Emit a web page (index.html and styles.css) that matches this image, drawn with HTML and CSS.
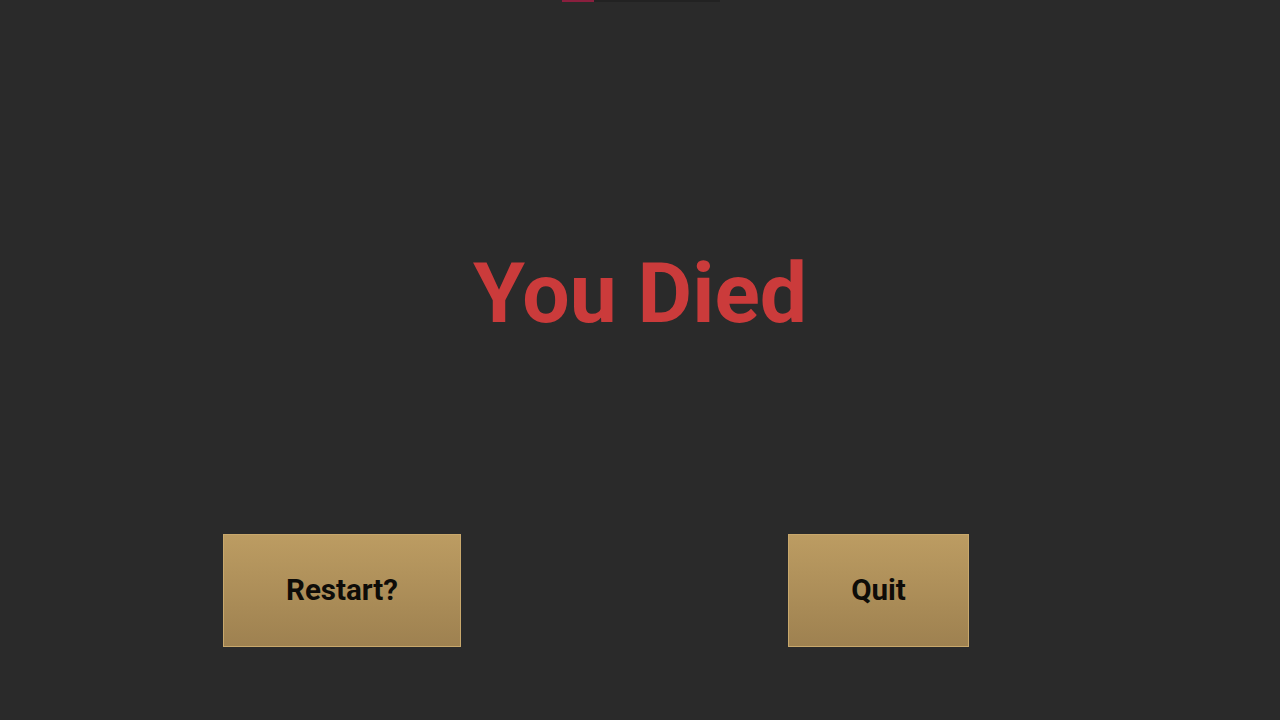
FILE: index.html
```html
<!DOCTYPE html>
<html>
<head>
<meta charset="utf-8">
<link rel="stylesheet" href="styles.css">
<title>You Died</title>
</head>
<body>
<div class="screen">
  <div class="hud">
    <div class="hp-bar"><div class="hp-fill"></div></div>
  </div>
  <h1 class="title">You Died</h1>
  <div class="actions">
    <button class="btn btn-restart">Restart?</button>
    <button class="btn btn-quit">Quit</button>
  </div>
</div>
</body>
</html>
```
FILE: styles.css
```css
html, body {
  margin: 0;
  padding: 0;
  background: #2a2a2a;
}
.screen {
  width: 1280px;
  height: 720px;
  display: flex;
  flex-direction: column;
  font-family: Roboto, "Liberation Sans", sans-serif;
}
.hud {
  display: flex;
  justify-content: center;
  height: 2px;
}
.hp-bar {
  width: 158px;
  height: 2px;
  background: #222222;
  margin-left: 1px;
}
.hp-fill {
  width: 32px;
  height: 2px;
  background: #8a1f3e;
}
.title {
  margin: 250px 0 0 0;
  text-align: center;
  font-size: 84px;
  line-height: 84px;
  font-weight: 700;
  color: #cb3b3b;
  letter-spacing: 0;
}
.actions {
  display: flex;
  gap: 327px;
  padding-left: 223px;
  margin-top: 198px;
}
.btn {
  height: 113px;
  border: 1px solid #c8a86c;
  background: linear-gradient(to bottom, #bc9c62, #9e8150);
  font-family: Roboto, "Liberation Sans", sans-serif;
  font-weight: 700;
  font-size: 29.5px;
  color: #0e0c08;
  padding: 0 0 1px 0;
  margin: 0;
  box-sizing: border-box;
}
.btn-restart { width: 238px; }
.btn-quit { width: 181px; }
```
